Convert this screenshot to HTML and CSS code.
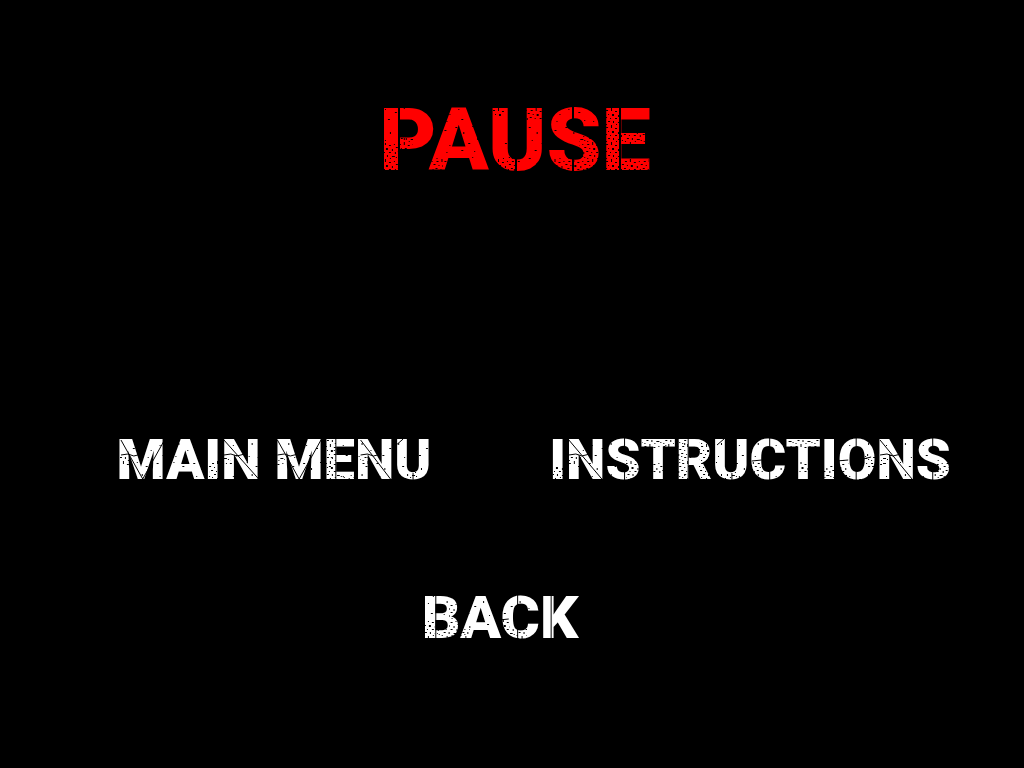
FILE: index.html
```html
<!DOCTYPE html>
<html lang="en">
<head>
<meta charset="utf-8">
<title>Pause</title>
<link rel="stylesheet" href="styles.css">
</head>
<body>
<svg class="defs" aria-hidden="true">
  <defs>
    <pattern id="light" width="37" height="31" patternUnits="userSpaceOnUse">
      <path d="M3 4h2v1h-2zM11 9h1v2h-1zM20 3h1v1h-1zM29 7h2v1h-2zM6 17h1v1h-1zM16 20h2v1h-2zM25 15h1v2h-1zM34 22h1v1h-1zM9 27h2v1h-2zM22 28h1v1h-1zM31 29h1v1h-1z"/>
    </pattern>
    <pattern id="dense" width="19" height="17" patternUnits="userSpaceOnUse">
      <path d="M1 1h2v1h-2zM6 0h1v2h-1zM10 2h2v1h-2zM15 1h1v1h-1zM17 4h2v1h-2zM3 5h1v1h-1zM7 5h2v2h-2zM13 6h1v2h-1zM0 8h2v1h-2zM5 9h1v1h-1zM10 9h2v1h-2zM16 9h1v2h-1zM3 12h2v1h-2zM8 12h1v2h-1zM13 13h3v1h-3zM1 15h1v1h-1zM6 16h1v1h-1zM11 15h1v1h-1zM17 14h1v1h-1z"/>
    </pattern>
  </defs>
</svg>
<main class="screen">
  <h1 class="title"><span class="label">PAUSE<svg class="wear" viewBox="0 0 274 96" preserveAspectRatio="none" aria-hidden="true">
    <path class="cut" d="M20 12V82M138 66V82M196 12V31M196 64V82M243 12V82"/>
    <path class="dense" d="M3 51h16v30h-16zM20 45h14v13h-14zM52 66h13v15h-13zM111 14h15v10h-15zM148 14h17v14h-17zM112 65h26v16h-26zM202 44h20v37h-20zM172 66h30v15h-30zM225 14h18v67h-18zM244 40h24v13h-24zM244 67h28v14h-28z"/>
    <path class="light" d="M3 14h30v37h-30zM66 14h35v60h-35zM126 28h38v53h-38zM168 14h54v30h-54z"/>
  </svg></span></h1>
  <nav class="menu">
    <button class="item" type="button"><span class="label">MAIN MENU<svg class="wear" viewBox="0 0 318 64" preserveAspectRatio="none" aria-hidden="true">
      <path class="cut" d="M4 12L26 51L48 12M105 11V53M108 12L144 52M162 12L184 51L206 12M221 11V53M246 12L277 52M299 45V54M4 27l7 -1l6 2l8 -2M108 27l7 -1l6 2l8 -2M162 27l7 -1l6 2l8 -2M246 27l7 -1l6 2l8 -2M282 17l7 -6"/>
      <path class="dense" d="M3 28h9v10h-9zM93 33h11v19h-11zM107 28h8v8h-8zM161 28h9v10h-9zM211 11h10v42h-10zM222 47h19v6h-19zM245 28h8v9h-8zM291 44h14v10h-14z"/>
      <path class="light" d="M14 11h77v43h-77zM109 11h36v43h-36zM172 11h144v43h-144z"/>
    </svg></span></button>
    <button class="item" type="button"><span class="label">INSTRUCTIONS<svg class="wear" viewBox="0 0 404 64" preserveAspectRatio="none" aria-hidden="true">
      <path class="cut" d="M20 12L54 52M76 10V21M76 43V54M140 11V53M169 17l7 -6M184 45V54M222 10V21M222 43V54M289 11V53M309 10V21M309 43V54M333 12L366 52M386 10V21M386 43V54M20 27l7 -1l6 2l8 -2M204 33l10 -1M289 33l12 -1M316 31l8 -2M333 27l7 -1l6 2l8 -2"/>
      <path class="dense" d="M4 37h11v15h-11zM20 28h8v9h-8zM77 32h16v22h-16zM94 11h32v9h-32zM105 34h11v12h-11zM130 11h10v42h-10zM151 12h14v40h-14zM176 44h16v10h-16zM204 33h12v12h-12zM240 11h32v9h-32zM251 34h11v12h-11zM276 37h11v15h-11zM290 32h10v16h-10zM318 26h11v13h-11zM333 28h8v9h-8zM387 32h16v22h-16z"/>
      <path class="light" d="M29 11h47v43h-47zM117 11h34v43h-34zM167 11h72v43h-72zM301 11h85v43h-85z"/>
    </svg></span></button>
    <button class="item back" type="button"><span class="label">BACK<svg class="wear" viewBox="0 0 159 64" preserveAspectRatio="none" aria-hidden="true">
      <path class="cut" d="M14 9V54M97 9V21M97 43V55M131 9V54M78 34l10 -1"/>
      <path class="dense" d="M3 35h10v19h-10zM15 43h22v11h-22zM27 16h11v26h-11zM37 43h12v11h-12zM78 33h11v12h-11zM89 43h18v12h-18z"/>
      <path class="light" d="M3 10h24v25h-24zM42 12h34v42h-34zM78 10h34v22h-34z"/>
    </svg></span></button>
  </nav>
</main>
</body>
</html>
```
FILE: styles.css
```css
* { box-sizing: border-box; }

body {
  margin: 0;
  background: #000;
  font-family: Roboto, "Liberation Sans", sans-serif;
}

.screen {
  min-height: 100vh;
  padding: 92px 36px 0;
  display: flex;
  flex-direction: column;
}

.title {
  margin: 0;
  padding-left: 6px;
  color: #f00;
  font-size: 88px;
  line-height: 96px;
  font-weight: 900;
  text-align: center;
}

.menu {
  margin-top: 240px;
  display: grid;
  grid-template-columns: 1fr 1fr;
  row-gap: 94px;
  justify-items: center;
}

.item {
  padding: 0;
  border: 0;
  background: none;
  color: #fff;
  font: 900 56px/64px Roboto, "Liberation Sans", sans-serif;
  cursor: pointer;
}

.back {
  grid-column: 1 / -1;
  margin-right: 24px;
  font-size: 60px;
}

.label {
  position: relative;
  display: inline-block;
}

/* Stencil gaps and worn paint over the lettering */
.wear {
  position: absolute;
  inset: 0;
  width: 100%;
  height: 100%;
  shape-rendering: crispEdges;
  pointer-events: none;
}

.defs {
  position: absolute;
  width: 0;
  height: 0;
}

.cut {
  fill: none;
  stroke: #000;
  stroke-width: 1;
}

.title .cut { stroke-width: 2; }
.dense { fill: url(#dense); }
.light { fill: url(#light); }
```
